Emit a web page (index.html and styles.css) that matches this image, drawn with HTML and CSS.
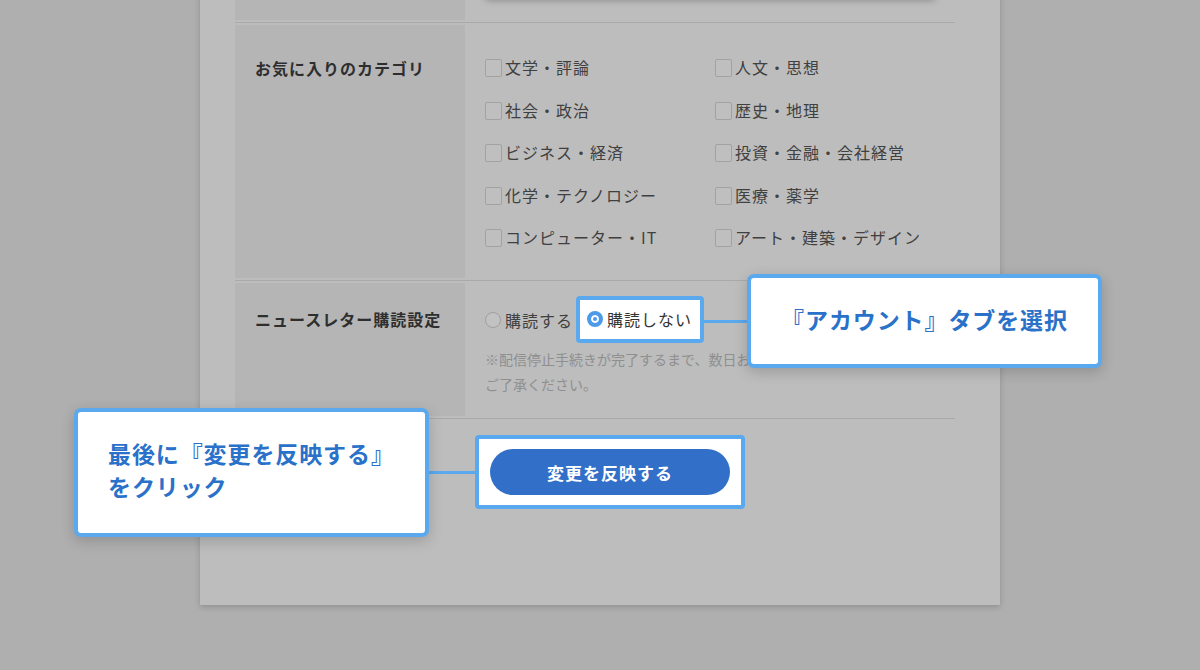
FILE: index.html
```html
<!DOCTYPE html>
<html lang="ja">

<head>
    <meta charset="UTF-8">
    <title>会員情報の変更</title>
    <link rel="stylesheet" href="styles.css">
</head>

<body>
    <div class="sheet">
        <div class="form-row first">
            <div class="form-label"></div>
            <div class="form-value">
                <div class="select-menu"></div>
            </div>
        </div>

        <div class="form-row">
            <div class="form-label">お気に入りのカテゴリ</div>
            <div class="form-value">
                <div class="category-grid">
                    <label class="check"><span class="box"></span>文学・評論</label>
                    <label class="check"><span class="box"></span>人文・思想</label>
                    <label class="check"><span class="box"></span>社会・政治</label>
                    <label class="check"><span class="box"></span>歴史・地理</label>
                    <label class="check"><span class="box"></span>ビジネス・経済</label>
                    <label class="check"><span class="box"></span>投資・金融・会社経営</label>
                    <label class="check"><span class="box"></span>化学・テクノロジー</label>
                    <label class="check"><span class="box"></span>医療・薬学</label>
                    <label class="check"><span class="box"></span>コンピューター・IT</label>
                    <label class="check"><span class="box"></span>アート・建築・デザイン</label>
                </div>
            </div>
        </div>

        <div class="form-row">
            <div class="form-label newsletter">ニュースレター購読設定</div>
            <div class="form-value newsletter">
                <div class="radio-group">
                    <label class="radio"><span class="dot"></span>購読する</label>
                    <label class="radio selected highlight"><span class="dot"></span>購読しない</label>
                </div>
                <p class="note">※配信停止手続きが完了するまで、数日お時間がかかる場合があります。<br>ご了承ください。</p>
            </div>
        </div>

        <div class="form-footer">
            <div class="highlight submit-wrap">
                <button class="submit">変更を反映する</button>
            </div>
        </div>
    </div>

    <!-- callouts -->
    <div class="connector connector-account"></div>
    <div class="callout callout-account">『アカウント』タブを選択</div>

    <div class="connector connector-submit"></div>
    <div class="callout callout-submit">最後に『変更を反映する』<br>をクリック</div>
</body>

</html>
```

FILE: styles.css
```css
body {
    margin: 0;
    height: 670px;
    overflow: hidden;
    background-color: #afafaf;
    font-family: "Noto Sans CJK JP", "Noto Sans", sans-serif;
    color: #404040;
    position: relative;
}

.sheet {
    width: 800px;
    height: 665px;
    margin: -60px auto 0;
    padding: 60px 45px 0 35px;
    box-sizing: border-box;
    background-color: #bdbdbd;
    box-shadow: 0 2px 6px rgba(0, 0, 0, 0.18);
}

.form-row {
    display: flex;
    padding: 2px 0;
    border-bottom: 1px solid #a9a9a9;
}

.form-row.first {
    margin-top: -60px;
}

.form-label {
    width: 230px;
    flex-shrink: 0;
    box-sizing: border-box;
    padding: 31px 20px 0;
    background-color: #b5b5b5;
    font-size: 16px;
    line-height: 24px;
    font-weight: bold;
    letter-spacing: 1px;
    color: #2e2e2e;
}

.form-row.first .form-label {
    height: 78px;
    padding: 0;
}

.form-value {
    flex: 1;
    padding: 30px 0 29px 20px;
}

.form-row.first .form-value {
    padding: 14px 20px 0 21px;
}

.select-menu {
    height: 42px;
    background-color: #bdbdbd;
    box-shadow: 0 2px 7px rgba(0, 0, 0, 0.3);
}

.category-grid {
    display: grid;
    grid-template-columns: 230px 230px;
    row-gap: 18.5px;
}

.check {
    display: flex;
    align-items: flex-start;
    font-size: 16px;
    line-height: 24px;
    letter-spacing: 1px;
    white-space: nowrap;
}

.check .box {
    width: 15px;
    height: 16px;
    margin-top: 4px;
    margin-right: 3px;
    border: 1px solid #a2a2a2;
    border-radius: 2px;
    background-color: #bfbfbf;
}

.form-label.newsletter {
    padding-top: 24px;
    height: 133px;
}

.form-value.newsletter {
    padding: 13px 0 0 20px;
}

.radio-group {
    display: flex;
    align-items: center;
}

.radio {
    display: flex;
    align-items: center;
    font-size: 16px;
    line-height: 24px;
    letter-spacing: 1px;
    white-space: nowrap;
}

.radio .dot {
    box-sizing: border-box;
    width: 16px;
    height: 16px;
    margin-right: 4px;
    border: 1.5px solid #a0a0a0;
    border-radius: 50%;
    background-color: #c2c2c2;
}

.highlight {
    background-color: #fff;
    border: 4px solid #5aa9ee;
    border-radius: 4px;
}

.radio.highlight {
    margin-left: 3px;
    padding: 7px 8px 8px 7px;
    color: #333;
}

.radio.selected .dot {
    border: 4px solid #4c9be8;
    background-color: #4c9be8;
    box-shadow: inset 0 0 0 2px #fff;
}

.note {
    margin: 4px 0 0;
    font-size: 14px;
    line-height: 25px;
    color: #8f8f8f;
    white-space: nowrap;
}

.form-footer {
    padding: 16px 0 0 240px;
}

.submit-wrap {
    display: inline-block;
    padding: 10px 11px;
}

.submit {
    display: block;
    width: 240px;
    height: 46px;
    padding-top: 2px;
    border: none;
    border-radius: 23px;
    background-color: #316fc8;
    color: #fff;
    font-family: inherit;
    font-size: 17px;
    font-weight: bold;
    letter-spacing: 1px;
}

.callout {
    position: absolute;
    box-sizing: border-box;
    background-color: #fff;
    border: 4px solid #5aa9ee;
    border-radius: 7px;
    box-shadow: 0 4px 14px rgba(0, 0, 0, 0.18);
    color: #2a71c9;
    font-size: 23px;
    font-weight: bold;
    letter-spacing: 0.9px;
}

.callout-account {
    left: 747px;
    top: 274px;
    width: 355px;
    height: 94px;
    padding-top: 25px;
    line-height: 32px;
    text-align: center;
}

.callout-submit {
    left: 74px;
    top: 408px;
    width: 355px;
    height: 129px;
    padding: 25px 0 0 30px;
    line-height: 33px;
}

.connector {
    position: absolute;
    height: 3px;
    background-color: #5aa9ee;
}

.connector-account {
    left: 702px;
    top: 320px;
    width: 48px;
}

.connector-submit {
    left: 426px;
    top: 471px;
    width: 52px;
}
```
